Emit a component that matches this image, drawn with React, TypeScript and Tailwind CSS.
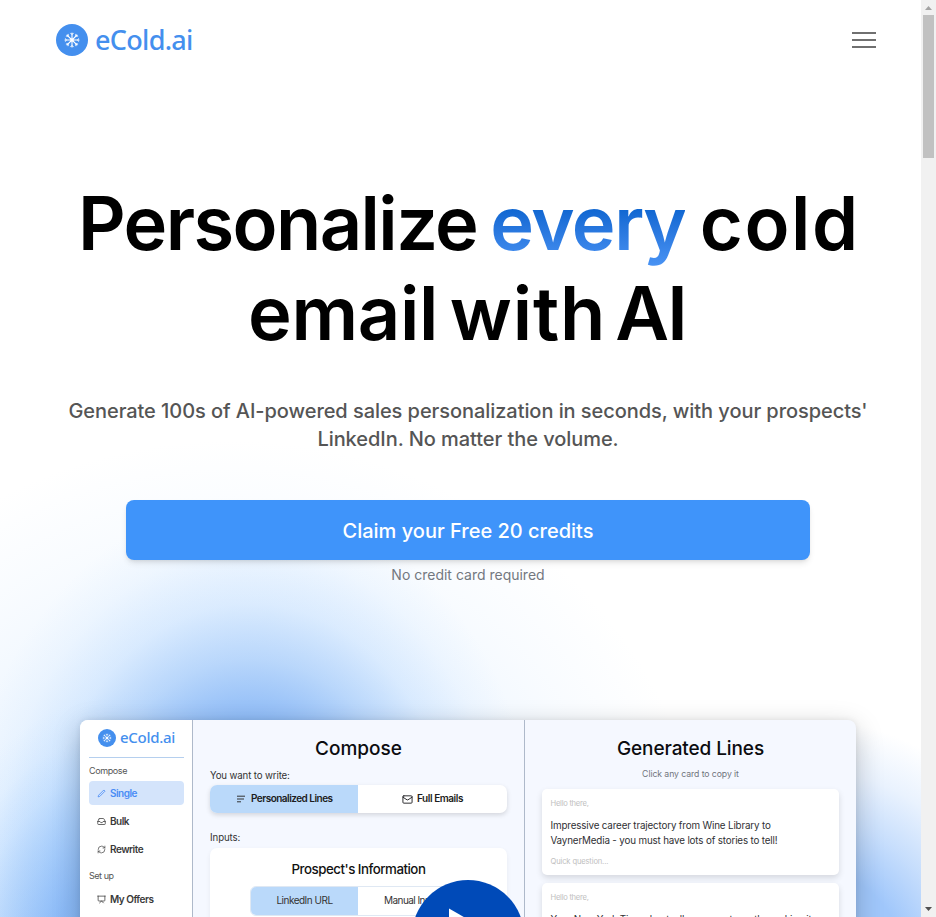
import type { ReactNode } from "react";
import { Inbox, RefreshCw, Presentation, Mail } from "lucide-react";

function Snowflake({ className }: { className: string }) {
  return (
    <svg viewBox="0 0 32 32" className={className} fill="none" stroke="#fff" strokeLinecap="round">
      <circle cx="16" cy="16" r="16" fill="#448fee" stroke="none" />
      {[0, 45, 90, 135, 180, 225, 270, 315].map((a) => (
        <g key={a} transform={`rotate(${a} 16 16)`}>
          <path d="M16 16V9" strokeWidth="1.1" />
          <path d="M14.7 9.2L16 10.6L17.3 9.2" strokeWidth="1" />
        </g>
      ))}
      <circle cx="16" cy="16" r="1.8" fill="#fff" stroke="none" />
    </svg>
  );
}

function NavItem({ icon, active, children }: { icon: ReactNode; active?: boolean; children: ReactNode }) {
  return (
    <div
      className={
        active
          ? "flex h-6 items-center rounded-[4px] bg-[#d4e4fb] pl-[8px] text-[#4a8cf5]"
          : "flex h-6 items-center pl-[8px] text-[#3a3a3a]"
      }
    >
      {icon}
      <span className="ml-[4px] text-[10px] font-semibold tracking-[-0.5px]">{children}</span>
    </div>
  );
}

function Sidebar() {
  return (
    <div className="w-[113px] shrink-0 border-r border-[#aeb9ca] bg-white pr-[8px] pl-[9px]">
      <div className="flex h-[38px] items-center border-b border-[#b5cfee] pl-[9px]">
        <Snowflake className="mt-[-2px] size-[18px]" />
        <span className="mt-[-3px] ml-[4px] font-['Noto_Sans'] text-[15px] font-medium tracking-[-0.3px] text-[#448fee]">eCold.ai</span>
      </div>
      <div className="mt-[6px] mb-[3px] h-[14px] text-[9px] leading-[14px] tracking-[-0.38px] text-[#555]">Compose</div>
      <div className="flex flex-col gap-[4px]">
        <NavItem
          active
          icon={
            <svg viewBox="0 0 10 10" className="size-[9px]" fill="none" stroke="currentColor" strokeWidth="0.9" strokeLinejoin="round">
              <path d="M1.2 8.8L1.8 6.9L7.6 1.1L8.9 2.4L3.1 8.2Z" />
            </svg>
          }
        >
          Single
        </NavItem>
        <NavItem icon={<Inbox className="size-[9px]" strokeWidth={2} />}>Bulk</NavItem>
        <NavItem icon={<RefreshCw className="size-[9px]" strokeWidth={1.8} />}>Rewrite</NavItem>
      </div>
      <div className="mt-[8px] mb-[4px] h-[14px] text-[9px] leading-[14px] tracking-[-0.45px] text-[#555]">Set up</div>
      <NavItem icon={<Presentation className="size-[9px]" strokeWidth={2} />}>My Offers</NavItem>
    </div>
  );
}

function ComposePane() {
  return (
    <div className="w-[332px] shrink-0 border-r border-[#aeb9ca] px-[17px] pt-[17px]">
      <h2 className="h-[24px] text-center text-[19px] leading-[24px] font-[550] tracking-[-0.02px] text-[#0c0c0f]">Compose</h2>
      <div className="mt-[8px] h-[14px] text-[9.7px] leading-[14px] tracking-[-0.14px] text-[#333]">You want to write:</div>
      <div className="mt-[2px] flex h-[28px] overflow-hidden rounded-[7px] bg-white text-[10px] font-semibold text-[#1c1c20] shadow-[0_2px_5px_rgba(0,0,0,0.14)]">
        <div className="flex w-[148px] items-center bg-[#bad9fa] pl-[26px]">
          <svg viewBox="0 0 10 8" className="mr-[5px] h-[8px] w-[10px]" stroke="#333" strokeWidth="1" fill="none">
            <path d="M1 1.2H9M1 4H8M1 6.8H5" />
          </svg>
          <span className="mt-[-1px] whitespace-nowrap tracking-[-0.52px]">Personalized Lines</span>
        </div>
        <div className="flex flex-1 items-center pl-[44px]">
          <Mail className="mr-[4px] size-[11px]" strokeWidth={2} />
          <span className="mt-[-1px] whitespace-nowrap tracking-[-0.45px]">Full Emails</span>
        </div>
      </div>
      <div className="mt-[18px] h-[14px] text-[9.7px] leading-[14px] tracking-[-0.1px] text-[#333]">Inputs:</div>
      <div className="mt-[3px] h-[120px] rounded-[7px] bg-white pt-[12px] shadow-[0_2px_5px_rgba(0,0,0,0.06)]">
        <h3 className="h-[18px] text-center text-[13.3px] leading-[18px] font-[550] tracking-[-0.49px] text-[#111]">Prospect's Information</h3>
        <div className="mx-[40px] mt-[8px] flex h-[30px] overflow-hidden rounded-[6px] border border-[#dfe8f3] text-[10px] text-[#333]">
          <div className="flex w-[107px] shrink-0 items-center justify-center bg-[#bad9fa] pb-px tracking-[-0.5px]">LinkedIn URL</div>
          <div className="flex flex-1 items-center pb-px pl-[26px] tracking-[-0.55px]">Manual Input</div>
        </div>
      </div>
    </div>
  );
}

function LineCard({ children }: { children: ReactNode }) {
  return (
    <div className="h-[86px] overflow-hidden rounded-[5px] bg-white pt-[8px] pl-[8.5px] shadow-[0_3px_6px_rgba(0,0,0,0.13)]">
      <div className="h-[14px] text-[7.6px] leading-[14px] tracking-[-0.26px] text-[#c0c0c0]">Hello there,</div>
      <div className="mt-[7px] h-[30px] text-[9.8px] leading-[15px] tracking-[-0.15px] whitespace-nowrap text-[#2f2f33]">{children}</div>
      <div className="mt-[7px] h-[14px] text-[7.6px] leading-[14px] tracking-[-0.15px] text-[#c0c0c0]">Quick question...</div>
    </div>
  );
}

function GeneratedPane() {
  return (
    <div className="flex-1 px-[17px] pt-[17px]">
      <h2 className="h-[24px] text-center text-[19px] leading-[24px] font-[550] tracking-[-0.1px] text-[#0c0c0f]">Generated Lines</h2>
      <div className="mt-[6px] h-[14px] text-center text-[8.7px] leading-[14px] tracking-[-0.08px] text-[#70747c]">Click any card to copy it</div>
      <div className="mt-[8px] flex flex-col gap-[8px]">
        <LineCard>
          Impressive career trajectory from Wine Library to
          <br />
          VaynerMedia - you must have lots of stories to tell!
        </LineCard>
        <LineCard>Your New York Times bestseller, congrats on the making it</LineCard>
      </div>
    </div>
  );
}

export default function App() {
  return (
    <div className="relative h-[917px] w-[936px] overflow-hidden bg-white bg-[radial-gradient(290px_370px_at_250px_870px,#6aa4f2_0%,#88b7f6_38%,rgba(138,187,248,0.52)_57%,rgba(145,195,253,0.24)_72%,rgba(150,200,255,0.08)_87%,rgba(150,200,255,0)_100%),radial-gradient(230px_280px_at_140px_970px,#6aa4f2_0%,#8ab8f6_39%,rgba(138,187,248,0.6)_57%,rgba(145,195,253,0.26)_74%,rgba(150,200,255,0.07)_87%,rgba(150,200,255,0)_100%),radial-gradient(240px_250px_at_810px_970px,#a0c7fb_0%,#a0c7fb_40%,rgba(165,202,251,0.62)_60%,rgba(165,202,251,0.24)_80%,rgba(165,202,251,0)_100%),radial-gradient(480px_460px_at_230px_900px,rgba(200,226,255,0.45)_0%,rgba(200,226,255,0.35)_50%,rgba(200,226,255,0.12)_80%,rgba(200,226,255,0)_100%)] font-['Inter',sans-serif]">
      <header className="flex h-[80px] items-center justify-between pr-[60px] pl-[56px]">
        <div className="flex items-center">
          <Snowflake className="size-8" />
          <span className="ml-[7px] font-['Noto_Sans'] text-[27px] leading-[36px] font-medium tracking-[-0.7px] text-[#448fee]">eCold.ai</span>
        </div>
        <button className="flex w-6 flex-col gap-[5px]" aria-label="Menu">
          <span className="h-[2px] bg-[#707070]" />
          <span className="h-[2px] bg-[#707070]" />
          <span className="h-[2px] bg-[#707070]" />
        </button>
      </header>

      <main>
        <h1 className="pt-[98px] text-[74px] leading-[90px] font-semibold text-black">
          <div className="flex pl-[78px]">
            <span className="tracking-[-1.6px]">Personalize</span>
            <span className="ml-[13px] bg-linear-to-b from-[#0060cc] from-25% to-[#4a94f5] to-100% bg-clip-text tracking-[-1.43px] text-transparent">every</span>
            <span className="ml-[14.5px] tracking-[1.5px]">cold</span>
          </div>
          <div className="flex pl-[248px]">
            <span className="tracking-[-0.3px]">email</span>
            <span className="ml-[11.5px] tracking-[0.9px]">with</span>
            <span className="ml-[9px] tracking-[-1.8px]">AI</span>
          </div>
        </h1>
        <p className="mt-[39px] text-center text-[20px] leading-[28px] font-[450] tracking-[-0.06px] text-[#555]">
          Generate 100s of AI-powered sales personalization in seconds, with your prospects'
          <br />
          LinkedIn. No matter the volume.
        </p>
        <div className="mx-[126px] mt-[47px] flex h-[60px] items-center justify-center rounded-lg bg-[#3f94fa] pt-[2px] text-[20px] font-medium text-white shadow-md">
          Claim your Free 20 credits
        </div>
        <p className="mt-[5px] text-center text-[14px] leading-[20px] text-[#737880]">No credit card required</p>

        <div className="relative mx-[80px] mt-[135px] flex h-[436px] rounded-lg bg-[#f5f8ff] shadow-[0_8px_28px_rgba(0,0,0,0.22),0_0_6px_rgba(0,0,0,0.08)]">
          <div className="flex w-full overflow-hidden rounded-lg">
            <Sidebar />
            <ComposePane />
            <GeneratedPane />
          </div>
          <div className="absolute top-[160px] left-[332px] size-[112px] rounded-full bg-[#004ab8]">
            <svg viewBox="0 0 112 112" className="size-full" fill="#fff">
              <path d="M37 28.5L85 56L37 83.5Z" />
            </svg>
          </div>
        </div>
      </main>

      <div className="absolute inset-y-0 right-0 flex w-[15px] flex-col items-center justify-between bg-[#f1f1f1]">
        <div className="flex flex-col items-center">
          <svg viewBox="0 0 15 15" className="size-[15px]" fill="#a3a3a3">
            <path d="M4 10L7.5 6L11 10Z" />
          </svg>
          <div className="h-[143px] w-[11px] bg-[#c1c1c1]" />
        </div>
        <svg viewBox="0 0 15 15" className="size-[15px]" fill="#505050">
          <path d="M4 5L7.5 9L11 5Z" />
        </svg>
      </div>
    </div>
  );
}
